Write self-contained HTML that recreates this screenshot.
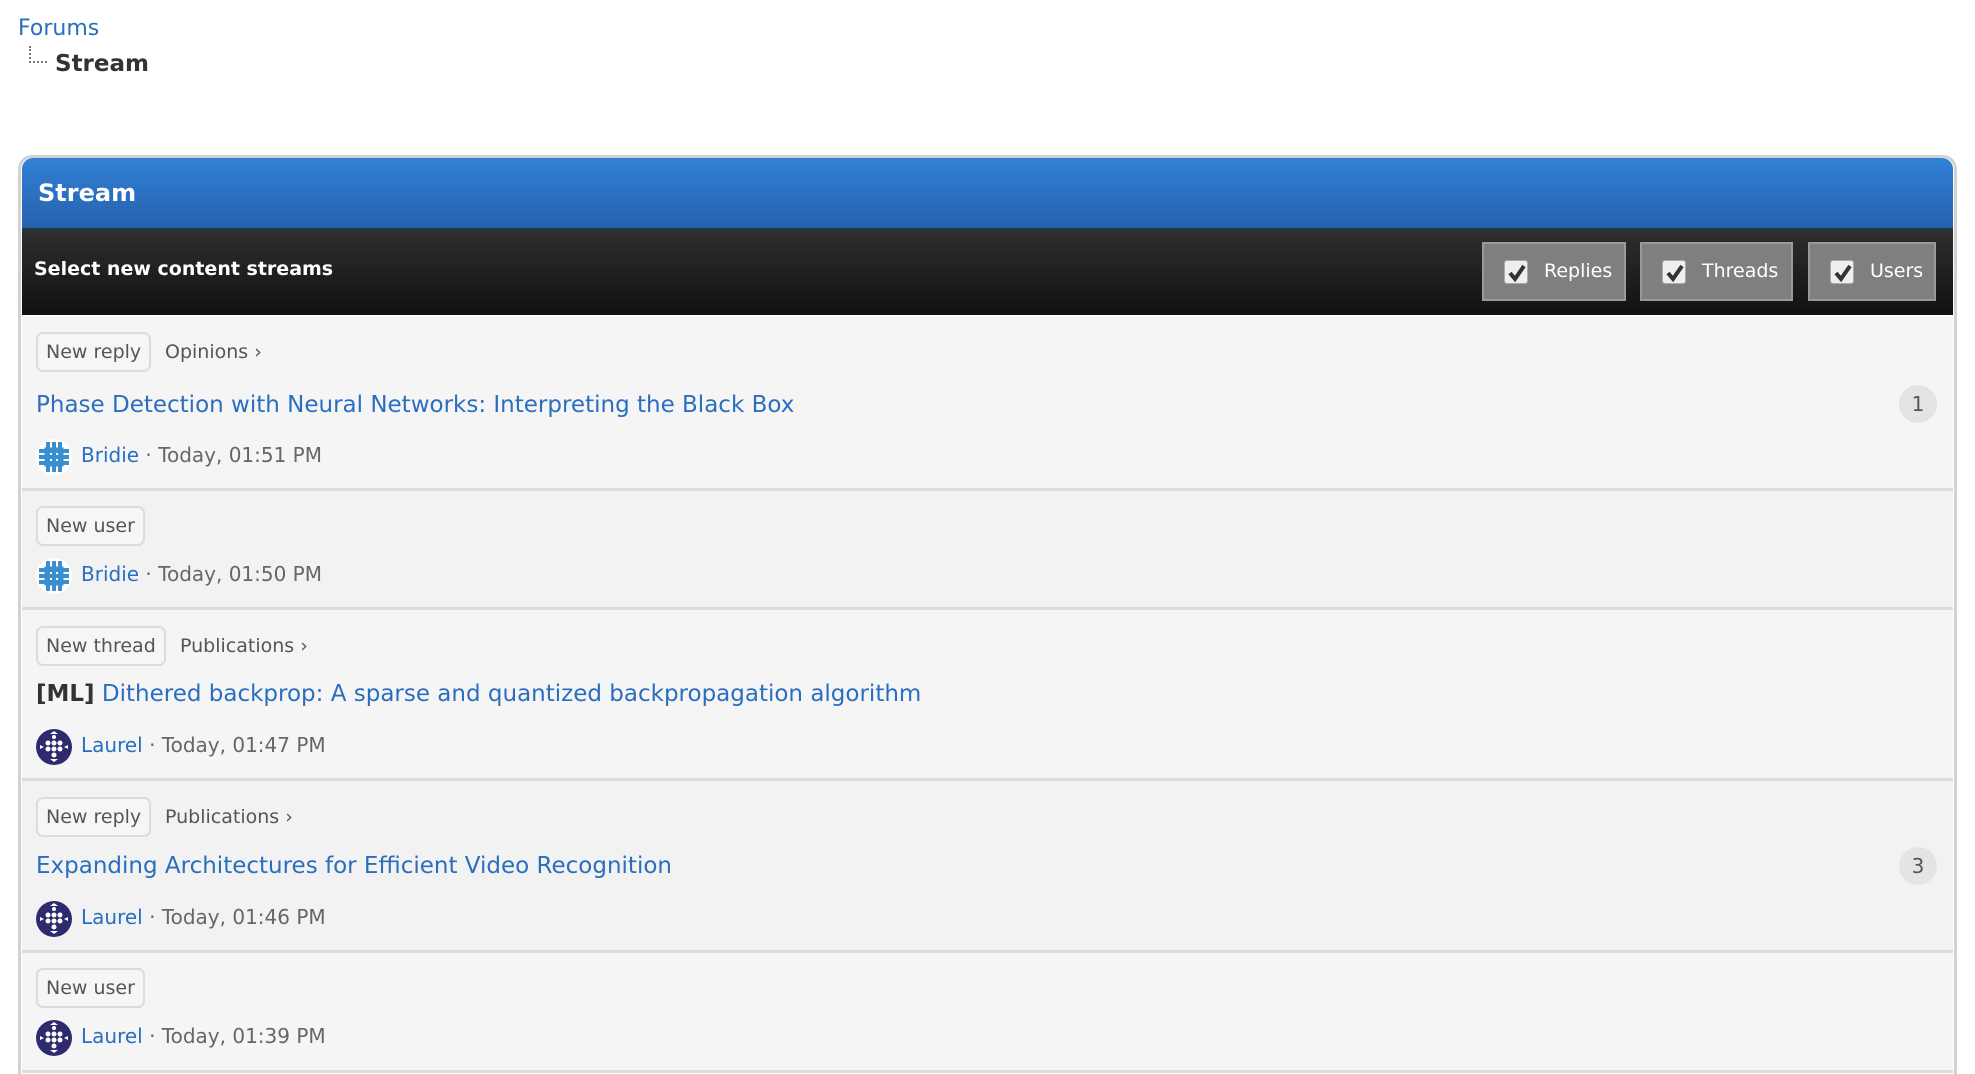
<!DOCTYPE html>
<html><head><meta charset="utf-8"><style>
*{box-sizing:border-box;margin:0;padding:0}
html{width:1975px;height:1074px;overflow:hidden}
body{width:1975px;height:1074px;background:#fff;font-family:"DejaVu Sans","Liberation Sans",sans-serif;position:relative;overflow:hidden;color:#555}
.abs{position:absolute;white-space:nowrap}
a{color:#2a6ebf;text-decoration:none}
.box{position:absolute;left:18px;top:155px;width:1939px;height:919px;border:3px solid #d2d2d2;border-bottom:0;border-radius:14px 14px 0 0;background:#fff}
.head{position:absolute;left:22px;top:158px;width:1931px;height:70px;border-radius:11px 11px 0 0;background:linear-gradient(#3181d6,#2661ad)}
.bar{position:absolute;left:22px;top:228px;width:1931px;height:87px;background:linear-gradient(#2e2e2e,#111);border-top:3px solid #1e3b3a}
.btn{position:absolute;top:242px;height:59px;background:#7f7f7f;border:2px solid #9a9a9a;color:#fff;font-size:20px;line-height:55px}
.cb{position:absolute;left:20px;top:16px;width:24px;height:24px;background:#eee;border:1px solid #aaa;border-radius:3px}
.cb svg{display:block}
.row{position:absolute;left:22px;width:1931px;border-bottom:3px solid #dcdcdc}
.tag{position:absolute;left:14px;height:40px;border:2px solid #dcdcdc;border-radius:7px;background:#f6f6f6;font-size:19px;line-height:36px;padding:0 8px;color:#555}
.cat{position:absolute;font-size:19px;color:#555;line-height:40px}
.title{position:absolute;left:14px;font-size:23px;line-height:30px;color:#2a6ebf}
.meta{position:absolute;left:14px;font-size:20px;line-height:36px;color:#666}
.meta svg{vertical-align:middle;margin-right:9px}
.cnt{position:absolute;left:1877px;width:38px;height:38px;border-radius:50%;background:#e4e4e4;font-size:20px;text-align:center;line-height:38px;color:#555}
</style></head><body>
<a class="abs" style="left:18px;top:16px;font-size:22px">Forums</a>
<div class="abs" style="left:29px;top:46px;width:18px;height:17px;border-left:2px dotted #777;border-bottom:2px dotted #777"></div>
<div class="abs" style="left:55px;top:51px;font-size:23px;font-weight:bold;color:#333">Stream</div>
<div class="box"></div>
<div class="head"></div>
<div class="abs" style="left:38px;top:179px;font-size:24px;font-weight:bold;color:#fff">Stream</div>
<div class="bar"></div>
<div class="abs" style="left:34px;top:258px;font-size:19px;font-weight:bold;color:#fff">Select new content streams</div>
<svg width="0" height="0" style="position:absolute"><defs><path id="ck" d="M5 12 L10 18 L19 5" stroke="#333" stroke-width="4" fill="none"/></defs></svg>
<div class="btn" style="left:1482px;width:144px"><span class="cb"><svg width="22" height="22"><use href="#ck"/></svg></span><span style="position:absolute;left:60px;font-size:19px">Replies</span></div>
<div class="btn" style="left:1640px;width:153px"><span class="cb"><svg width="22" height="22"><use href="#ck"/></svg></span><span style="position:absolute;left:60px;font-size:19px">Threads</span></div>
<div class="btn" style="left:1808px;width:128px"><span class="cb"><svg width="22" height="22"><use href="#ck"/></svg></span><span style="position:absolute;left:60px;font-size:19px">Users</span></div>

<svg width="0" height="0" style="position:absolute"><defs>
<g id="bri"><circle cx="18" cy="18" r="18" fill="#fff"/><path d="M3 12h30M3 18h30M3 24h30M12 3v30M18 3v30M24 3v30" stroke="#3a8fd0" stroke-width="4"/><rect x="10" y="10" width="16" height="16" fill="none" stroke="#3a8fd0" stroke-width="3"/></g>
<g id="lau"><circle cx="18" cy="18" r="18" fill="#2d2a6e"/><g fill="#fff"><circle cx="12" cy="14" r="2.5"/><circle cx="18" cy="14" r="2.5"/><circle cx="24" cy="14" r="2.5"/><circle cx="12" cy="20" r="2.5"/><circle cx="18" cy="20" r="2.5"/><circle cx="24" cy="20" r="2.5"/><circle cx="18" cy="26" r="2.5"/><circle cx="18" cy="8" r="2"/><path d="M4 16l4 2-4 2zM32 16l-4 2 4 2zM14 30l4 3 4-3zM14 5l4-3 4 3z"/></g></g>
</defs></svg>

<div class="row" style="top:316px;height:175px;background:#f5f5f5">
<div class="tag" style="top:16px">New reply</div><div class="cat" style="left:143px;top:16px">Opinions ›</div>
<a class="title" style="top:74px">Phase Detection with Neural Networks: Interpreting the Black Box</a>
<div class="cnt" style="top:69px">1</div>
<div class="meta" style="top:121px"><svg width="36" height="36"><use href="#bri"/></svg><a>Bridie</a> · Today, 01:51 PM</div>
</div>
<div class="row" style="top:491px;height:119px;background:#f2f2f2">
<div class="tag" style="top:15px">New user</div>
<div class="meta" style="top:65px"><svg width="36" height="36"><use href="#bri"/></svg><a>Bridie</a> · Today, 01:50 PM</div>
</div>
<div class="row" style="top:610px;height:171px;background:#f5f5f5">
<div class="tag" style="top:16px">New thread</div><div class="cat" style="left:158px;top:16px">Publications ›</div>
<div class="title" style="top:69px"><b style="color:#333">[ML]</b> <a>Dithered backprop: A sparse and quantized backpropagation algorithm</a></div>
<div class="meta" style="top:117px"><svg width="36" height="36"><use href="#lau"/></svg><a>Laurel</a> · Today, 01:47 PM</div>
</div>
<div class="row" style="top:781px;height:172px;background:#f2f2f2">
<div class="tag" style="top:16px">New reply</div><div class="cat" style="left:143px;top:16px">Publications ›</div>
<a class="title" style="top:70px">Expanding Architectures for Efficient Video Recognition</a>
<div class="cnt" style="top:66px">3</div>
<div class="meta" style="top:118px"><svg width="36" height="36"><use href="#lau"/></svg><a>Laurel</a> · Today, 01:46 PM</div>
</div>
<div class="row" style="top:953px;height:120px;background:#f5f5f5">
<div class="tag" style="top:15px">New user</div>
<div class="meta" style="top:65px"><svg width="36" height="36"><use href="#lau"/></svg><a>Laurel</a> · Today, 01:39 PM</div>
</div>
</body></html>
